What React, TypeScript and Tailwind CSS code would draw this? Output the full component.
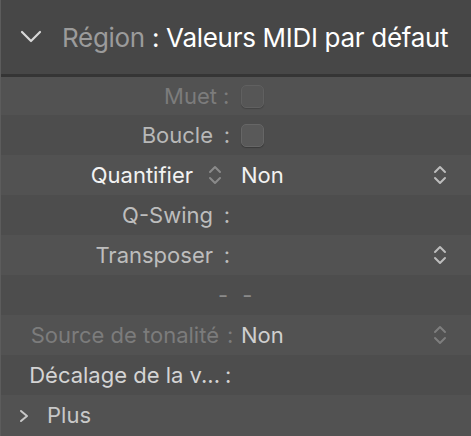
import React from "react";

const font = { fontFamily: "Inter, 'Noto Sans', sans-serif" };

function UpDown({ className = "" }: { className?: string }) {
  return (
    <svg width="16" height="22" viewBox="0 0 16 22" fill="none" className={className}>
      <path d="M3 8 L8 3 L13 8" stroke="currentColor" strokeWidth="2" strokeLinecap="round" strokeLinejoin="round" />
      <path d="M3 14 L8 19 L13 14" stroke="currentColor" strokeWidth="2" strokeLinecap="round" strokeLinejoin="round" />
    </svg>
  );
}

function Check() {
  return <div className="h-[23px] w-[23px] rounded-[5px] border border-[#666] bg-[#595959] shadow-[0_1px_1px_rgba(0,0,0,0.25)]" />;
}

type RowProps = {
  label?: React.ReactNode;
  colon?: boolean;
  labelClass?: string;
  labelW?: string;
  colonClass?: string;
  value?: React.ReactNode;
  right?: React.ReactNode;
  tone: "a" | "b";
  h?: string;
};

function Row({
  label,
  colon = true,
  labelClass = "",
  labelW = "w-[212px]",
  colonClass = "w-[28px] text-center",
  value,
  right,
  tone,
  h = "h-10",
}: RowProps) {
  return (
    <div className={`flex items-center ${h} ${tone === "a" ? "bg-[#525252]" : "bg-[#4d4d4d]"}`}>
      <div className={`${labelW} shrink-0 whitespace-nowrap text-right ${labelClass}`}>{label}</div>
      <div className={`${colonClass} shrink-0 ${labelClass}`}>{colon ? ":" : ""}</div>
      <div className="flex flex-1 items-center">{value}</div>
      <div className="flex w-[39px] shrink-0 justify-start">{right}</div>
    </div>
  );
}

export default function App() {
  return (
    <div className="h-[436px] w-[471px] overflow-hidden border-l border-[#5c5c5c] bg-[#4f4f4f] text-[22px]" style={font}>
      <div className="flex h-[74px] items-center gap-[20px] bg-[#474747] pl-[19px] text-[26px]">
        <svg width="22" height="14" viewBox="0 0 22 14" fill="none" className="text-[#d8d8d8]">
          <path d="M2 2 L11 11 L20 2" stroke="currentColor" strokeWidth="2.2" strokeLinecap="round" strokeLinejoin="round" />
        </svg>
        <div className="whitespace-nowrap tracking-[-0.3px]">
          <span className="text-[#9b9b9b]">Région</span>
          <span className="text-white"> : Valeurs MIDI par défaut</span>
        </div>
      </div>
      <div className="h-[3px] bg-[#353535]" />
      <Row
        tone="a"
        h="h-[38px]"
        label="Muet"
        labelW="w-[216px]"
        colonClass="w-[24px] pl-[6px]"
        labelClass="text-[#7c7c7c]"
        value={<div className="opacity-70"><Check /></div>}
      />
      <Row tone="b" label="Boucle" labelClass="text-[#b8b8b8]" value={<Check />} />
      <Row
        tone="a"
        colon={false}
        label={
          <span className="inline-flex items-center justify-end gap-[14px]">
            <span className="text-[#f2f2f2]">Quantifier</span>
            <UpDown className="-mr-[10px] text-[#8a8a8a]" />
          </span>
        }
        value={<span className="text-[#f2f2f2]">Non</span>}
        right={<UpDown className="text-[#bdbdbd]" />}
      />
      <Row tone="b" label="Q-Swing" labelClass="text-[#bdbdbd]" />
      <Row tone="a" label="Transposer" labelClass="text-[#bdbdbd]" right={<UpDown className="text-[#bdbdbd]" />} />
      <Row
        tone="b"
        colon={false}
        value={
          <span className="-ml-[23px] flex gap-[14px] text-[#8a8a8a]">
            <span>-</span>
            <span>-</span>
          </span>
        }
      />
      <Row
        tone="a"
        label="Source de tonalité"
        labelW="w-[218px]"
        colonClass="w-[22px] pl-[8px]"
        labelClass="text-[#7c7c7c]"
        value={<span className="text-[#cfcfcf]">Non</span>}
        right={<UpDown className="text-[#7e7e7e]" />}
      />
      <Row
        tone="b"
        label="Décalage de la v..."
        labelW="w-[219px]"
        colonClass="w-[21px] pl-[5px]"
        labelClass="text-[#d4d4d4]"
      />
      <div className="flex h-[41px] items-center gap-[18px] bg-[#525252] pl-[18px] text-[#c8c8c8]">
        <svg width="10" height="14" viewBox="0 0 10 14" fill="none">
          <path d="M2 2 L8 7 L2 12" stroke="currentColor" strokeWidth="2" strokeLinecap="round" strokeLinejoin="round" />
        </svg>
        <span>Plus</span>
      </div>
    </div>
  );
}
